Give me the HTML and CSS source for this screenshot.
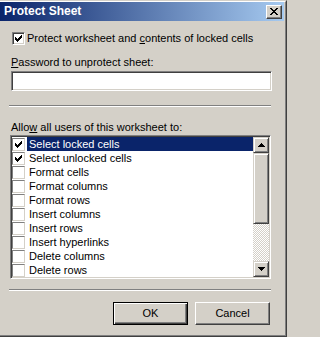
FILE: index.html
```html
<!DOCTYPE html>
<html>
<head>
<meta charset="utf-8">
<title>Protect Sheet</title>
<link rel="stylesheet" href="styles.css">
</head>
<body>
<div class="window">
  <div class="frame">
    <div class="titlebar">
      <span class="title">Protect Sheet</span>
      <span class="close">
        <svg width="8" height="7" viewBox="0 0 8 7" shape-rendering="crispEdges"><path fill="#000" d="M0 0h2v1h-2z M6 0h2v1h-2z M1 1h2v1h-2z M5 1h2v1h-2z M2 2h4v1h-4z M3 3h2v1h-2z M2 4h4v1h-4z M1 5h2v1h-2z M5 5h2v1h-2z M0 6h2v1h-2z M6 6h2v1h-2z"/></svg>
      </span>
    </div>
    <div class="body">
      <div class="check-row">
        <span class="checkbox">
          <svg width="7" height="7" viewBox="0 0 7 7" shape-rendering="crispEdges"><path fill="#000" d="M6 0h1v1h-1z M5 1h2v1h-2z M0 2h1v1h-1z M4 2h3v1h-3z M0 3h2v1h-2z M3 3h3v1h-3z M0 4h5v1h-5z M1 5h3v1h-3z M2 6h1v1h-1z"/></svg>
        </span>
        <span class="text">Protect worksheet and <u>c</u>ontents of locked cells</span>
      </div>
      <div class="label pw-label"><u>P</u>assword to unprotect sheet:</div>
      <div class="input"></div>
      <div class="sep sep-top"></div>
      <div class="label allow-label">Allo<u>w</u> all users of this worksheet to:</div>
      <div class="listbox">
        <div class="items">
          <div class="item selected">
            <span class="lcheck"><svg width="7" height="7" viewBox="0 0 7 7" shape-rendering="crispEdges"><path fill="#000" d="M6 0h1v1h-1z M5 1h2v1h-2z M0 2h1v1h-1z M4 2h3v1h-3z M0 3h2v1h-2z M3 3h3v1h-3z M0 4h5v1h-5z M1 5h3v1h-3z M2 6h1v1h-1z"/></svg></span>
            <span class="itext">Select locked cells</span>
          </div>
          <div class="item">
            <span class="lcheck"><svg width="7" height="7" viewBox="0 0 7 7" shape-rendering="crispEdges"><path fill="#000" d="M6 0h1v1h-1z M5 1h2v1h-2z M0 2h1v1h-1z M4 2h3v1h-3z M0 3h2v1h-2z M3 3h3v1h-3z M0 4h5v1h-5z M1 5h3v1h-3z M2 6h1v1h-1z"/></svg></span>
            <span class="itext">Select unlocked cells</span>
          </div>
          <div class="item"><span class="lcheck"></span><span class="itext">Format cells</span></div>
          <div class="item"><span class="lcheck"></span><span class="itext">Format columns</span></div>
          <div class="item"><span class="lcheck"></span><span class="itext">Format rows</span></div>
          <div class="item"><span class="lcheck"></span><span class="itext">Insert columns</span></div>
          <div class="item"><span class="lcheck"></span><span class="itext">Insert rows</span></div>
          <div class="item"><span class="lcheck"></span><span class="itext">Insert hyperlinks</span></div>
          <div class="item"><span class="lcheck"></span><span class="itext">Delete columns</span></div>
          <div class="item"><span class="lcheck"></span><span class="itext">Delete rows</span></div>
        </div>
        <div class="scrollbar">
          <div class="sbtn">
            <svg width="7" height="4" viewBox="0 0 7 4" shape-rendering="crispEdges"><path fill="#000" d="M3 0h1v1h-1z M2 1h3v1h-3z M1 2h5v1h-5z M0 3h7v1h-7z"/></svg>
          </div>
          <div class="thumb"></div>
          <div class="track"></div>
          <div class="sbtn">
            <svg width="7" height="4" viewBox="0 0 7 4" shape-rendering="crispEdges"><path fill="#000" d="M0 0h7v1h-7z M1 1h5v1h-5z M2 2h3v1h-3z M3 3h1v1h-1z"/></svg>
          </div>
        </div>
      </div>
      <div class="sep sep-bottom"></div>
      <div class="buttons">
        <div class="btn default">OK</div>
        <div class="btn">Cancel</div>
      </div>
    </div>
  </div>
</div>
</body>
</html>
```

FILE: styles.css
```css
html, body {
  margin: 0;
  padding: 0;
  background: #d4d0c8;
}

body {
  font-family: "Liberation Sans", Arial, sans-serif;
  font-size: 11px;
  line-height: 13px;
  color: #000;
}

.window {
  width: 287px;
  height: 337px;
  box-sizing: border-box;
  border-top: 1px solid #d4d0c8;
  border-right: 1px solid #404040;
  border-bottom: 1px solid #404040;
  background: #d4d0c8;
}

.frame {
  height: 100%;
  box-sizing: border-box;
  border-top: 1px solid #ffffff;
  border-right: 1px solid #808080;
  border-bottom: 1px solid #808080;
}

.titlebar {
  height: 19px;
  margin-right: 1px;
  display: flex;
  align-items: flex-start;
  justify-content: space-between;
  background: linear-gradient(to right, #0a246a 0%, #a6caf0 100%);
}

.title {
  color: #fff;
  font-weight: bold;
  font-size: 12px;
  line-height: 19px;
  padding-left: 4px;
}

.close {
  width: 16px;
  height: 14px;
  margin-top: 3px;
  margin-right: 2px;
  box-sizing: border-box;
  background: #d4d0c8;
  border: 1px solid;
  border-color: #ffffff #404040 #404040 #ffffff;
  box-shadow: inset -1px -1px #808080;
  display: flex;
  align-items: flex-start;
  justify-content: flex-start;
  padding: 2px 0 0 3px;
}

.close svg {
  display: block;
}

.body {
  display: flex;
  flex-direction: column;
  align-items: flex-start;
}

.check-row {
  display: flex;
  align-items: center;
  gap: 2px;
  height: 13px;
  margin: 11px 0 0 12px;
}

.checkbox {
  width: 13px;
  height: 13px;
  box-sizing: border-box;
  background: #fff;
  border: 1px solid;
  border-color: #808080 #ffffff #ffffff #808080;
  box-shadow: inset 1px 1px #404040, inset -1px -1px #d4d0c8;
  display: flex;
  align-items: center;
  justify-content: center;
}

.checkbox svg, .lcheck svg, .sbtn svg {
  display: block;
}

.label {
  margin-left: 11px;
  height: 13px;
}

.pw-label {
  margin-top: 11px;
}

.input {
  margin: 2px 0 0 11px;
  width: 261px;
  height: 20px;
  box-sizing: border-box;
  background: #fff;
  border: 1px solid;
  border-color: #808080 #ffffff #ffffff #808080;
  box-shadow: inset 1px 1px #404040, inset -1px -1px #d4d0c8;
}

.sep {
  margin-left: 9px;
  width: 262px;
  height: 1px;
  border-top: 1px solid #808080;
  background: #ffffff;
}

.sep-top {
  margin-top: 14px;
}

.allow-label {
  margin-top: 14px;
}

.listbox {
  margin: 1px 0 0 10px;
  width: 261px;
  height: 144px;
  box-sizing: border-box;
  background: #fff;
  border: 1px solid;
  border-color: #808080 #ffffff #ffffff #808080;
  box-shadow: inset 1px 1px #404040, inset -1px -1px #d4d0c8;
  padding: 1px;
  display: flex;
}

.items {
  flex: 1;
  display: flex;
  flex-direction: column;
}

.item {
  height: 14px;
  display: flex;
  align-items: center;
}

.lcheck {
  width: 13px;
  height: 13px;
  box-sizing: border-box;
  background: #fff;
  border: 1px solid;
  border-color: #808080 #d4d0c8 #d4d0c8 #808080;
  display: flex;
  align-items: center;
  justify-content: center;
  flex: none;
}

.itext {
  flex: 1;
  height: 14px;
  line-height: 14px;
  margin-left: 2px;
  padding-left: 2px;
}

.item.selected .itext {
  background: #0a246a;
  color: #fff;
}

.scrollbar {
  width: 16px;
  display: flex;
  flex-direction: column;
}

.sbtn, .thumb {
  box-sizing: border-box;
  background: #d4d0c8;
  border: 1px solid;
  border-color: #d4d0c8 #404040 #404040 #d4d0c8;
  box-shadow: inset 1px 1px #ffffff, inset -1px -1px #808080;
}

.sbtn {
  height: 16px;
  display: flex;
  align-items: center;
  justify-content: center;
}

.thumb {
  height: 71px;
}

.track {
  flex: 1;
  background-color: #d4d0c8;
  background-image: conic-gradient(#ffffff 25%, #d4d0c8 0 50%, #ffffff 0 75%, #d4d0c8 0);
  background-size: 2px 2px;
}

.sep-bottom {
  margin-top: 10px;
}

.buttons {
  margin: 11px 0 0 113px;
  display: flex;
  gap: 7px;
}

.btn {
  width: 75px;
  height: 23px;
  box-sizing: border-box;
  background: #d4d0c8;
  border: 1px solid;
  border-color: #ffffff #404040 #404040 #ffffff;
  box-shadow: inset -1px -1px #808080;
  display: flex;
  align-items: center;
  justify-content: center;
  line-height: 13px;
}

.btn.default {
  border-color: #000;
  box-shadow: inset 1px 1px #ffffff, inset -1px -1px #404040, inset -2px -2px #808080;
}
```
